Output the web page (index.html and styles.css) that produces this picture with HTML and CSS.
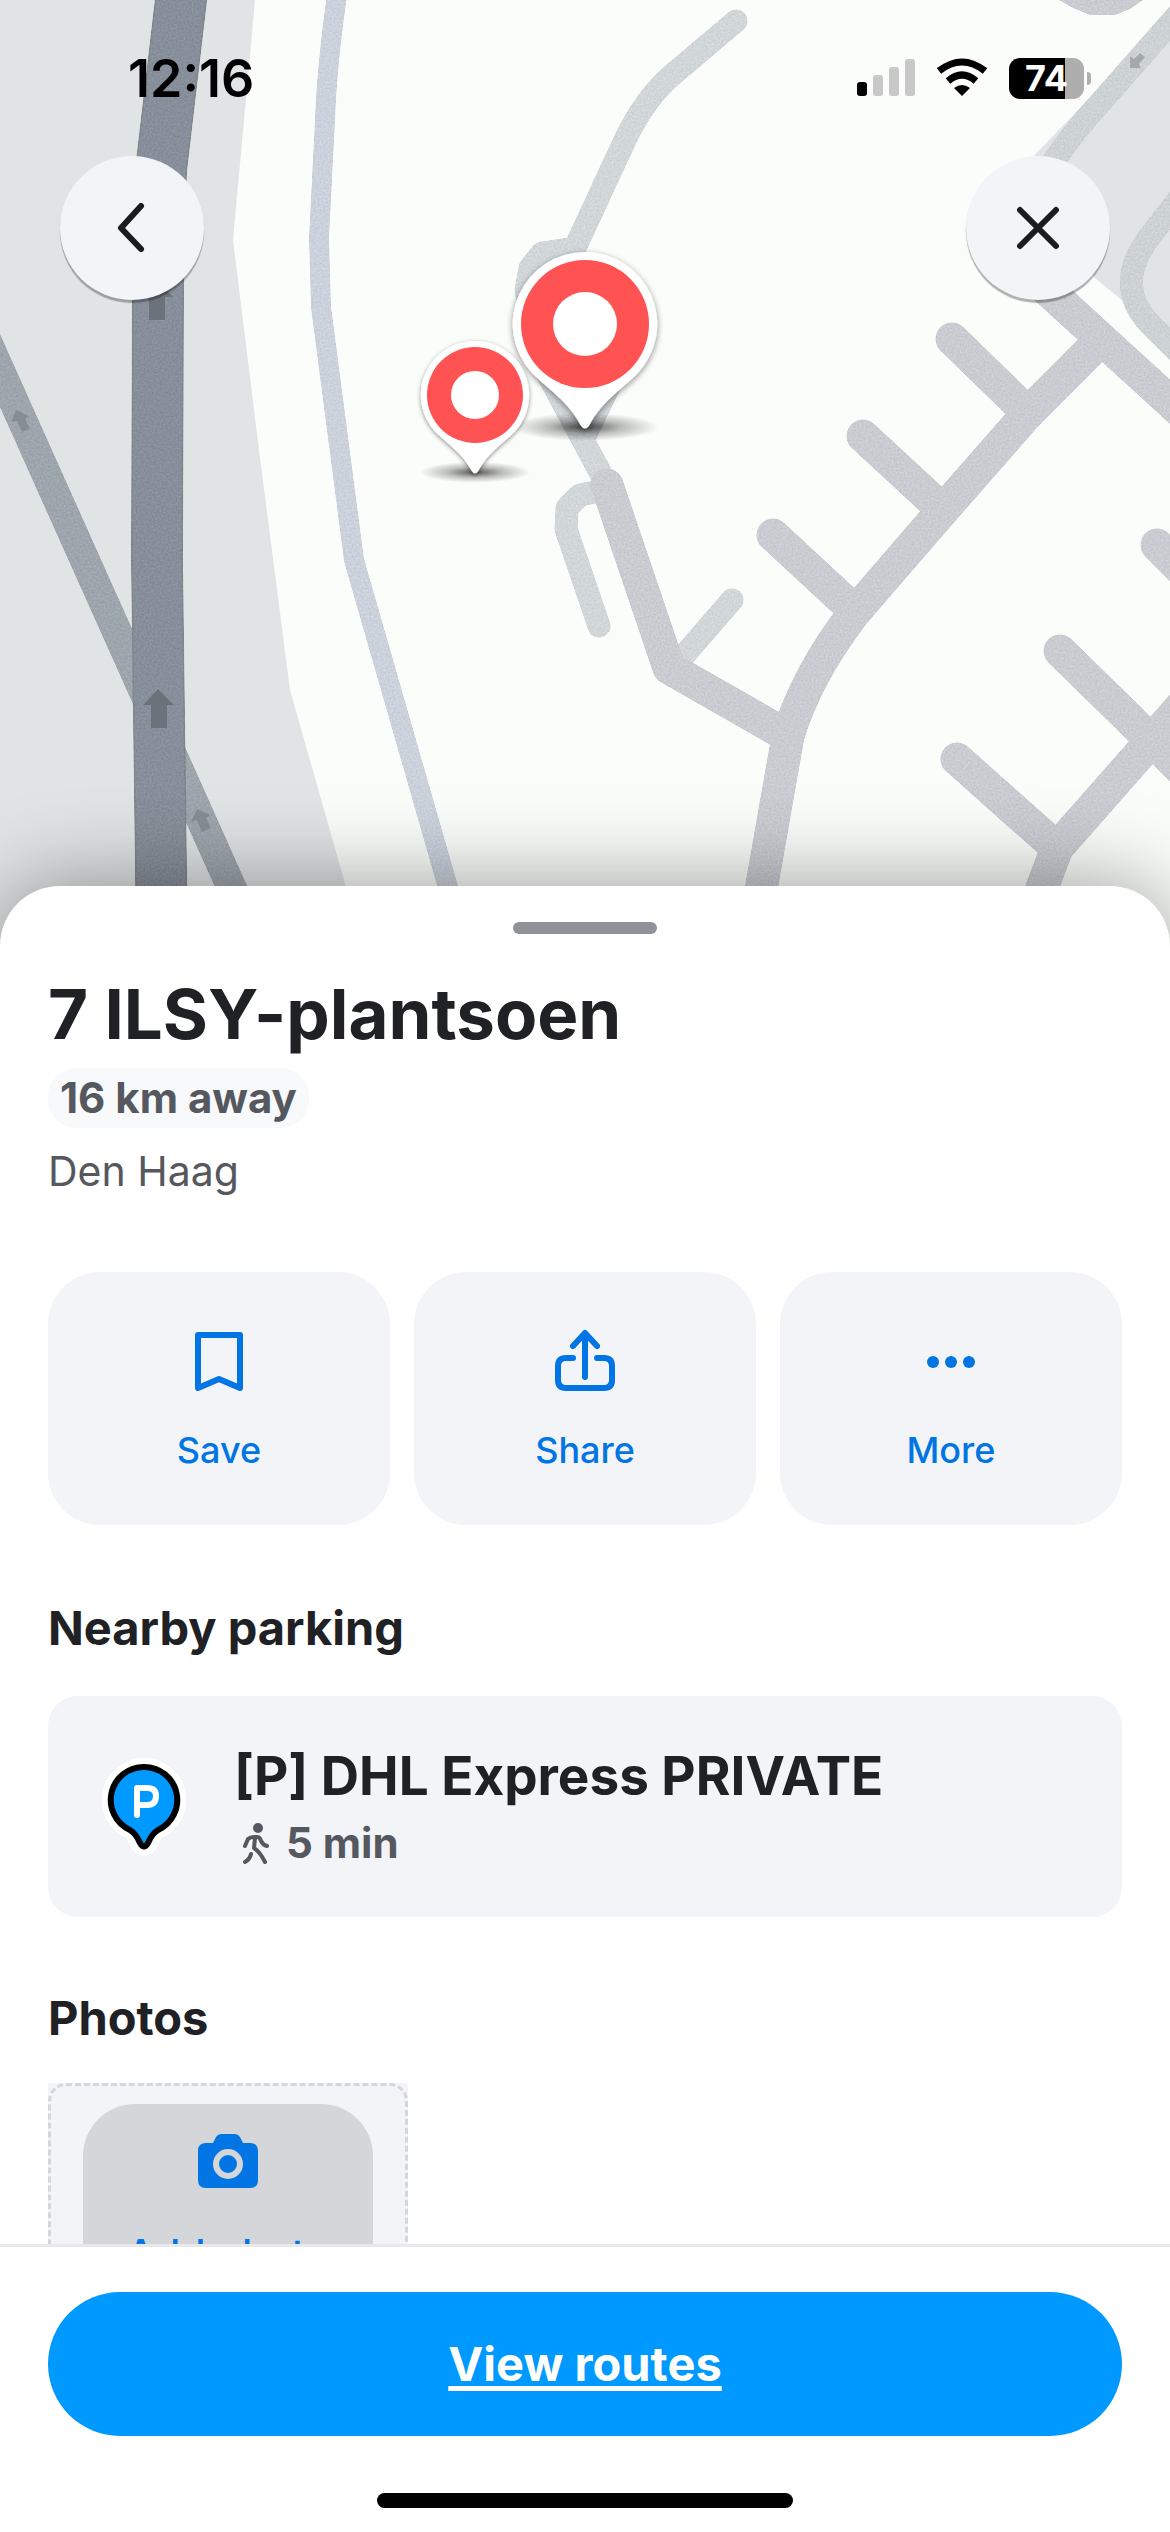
FILE: index.html
```html
<!DOCTYPE html>
<html lang="en">
<head>
    <meta charset="UTF-8">
    <meta name="viewport" content="width=device-width, initial-scale=1.0">
    <title>7 ILSY-plantsoen</title>
    <link rel="stylesheet" href="styles.css">
</head>
<body>
    <!-- Map -->
    <header class="map">
        <svg class="map-canvas" viewBox="0 0 1170 950" preserveAspectRatio="xMidYMin slice" aria-hidden="true">
            <defs>
                <radialGradient id="pinShadow">
                    <stop offset="0" stop-color="#000" stop-opacity="0.65"/>
                    <stop offset="0.5" stop-color="#000" stop-opacity="0.25"/>
                    <stop offset="1" stop-color="#000" stop-opacity="0"/>
                </radialGradient>
                <filter id="pinGlow" x="-20%" y="-20%" width="140%" height="140%">
                    <feDropShadow dx="0" dy="2" stdDeviation="3" flood-color="#000" flood-opacity="0.45"/>
                </filter>
                <!-- Asphalt grain -->
                <filter id="grain" filterUnits="userSpaceOnUse" x="0" y="0" width="1170" height="950" color-interpolation-filters="sRGB">
                    <feTurbulence type="fractalNoise" baseFrequency="0.5" numOctaves="2" result="noise"/>
                    <feColorMatrix in="noise" values="1 0 0 0 0  1 0 0 0 0  1 0 0 0 0  0 0 0 0 1" result="gray"/>
                    <feComposite in="SourceGraphic" in2="gray" operator="arithmetic" k1="0" k2="1" k3="0.12" k4="-0.06" result="mix"/>
                    <feComposite in="mix" in2="SourceGraphic" operator="in"/>
                </filter>
                <g id="pin">
                    <ellipse cx="0" cy="103" rx="74" ry="14" fill="url(#pinShadow)"/>
                    <path d="M0-72a72 72 0 0 1 53 121C35 67 17 77 4 102Q0 107-4 102C-17 77-35 67-53 49A72 72 0 0 1 0-72Z" fill="#fff" filter="url(#pinGlow)"/>
                    <circle r="64" fill="#ff5252"/>
                    <circle r="32" fill="#fff"/>
                </g>
            </defs>

            <!-- Land -->
            <rect width="1170" height="950" fill="#fbfdfa"/>
            <path d="M0 0H255L233 240 259 450 290 690 364 950H0Z" fill="#e0e4e5"/>
            <path d="M1170 15L1049 140 1030 160 1094 277 1124 302 1170 345Z" fill="#e0e4e5"/>

            <g filter="url(#grain)">
                <!-- Paths -->
                <g fill="none" stroke="#d1d6d9" stroke-width="23" stroke-linecap="round" stroke-linejoin="round">
                    <path d="M736 21L671 76Q644 100 625 140L575 248 542 253 530 268 526 290 540 360 607 485"/>
                    <path d="M612 380L585 436"/>
                    <path d="M605 490L580 495 567 508 566 529 599 626"/>
                    <path d="M732 600L680 660"/>
                    <path d="M1180 12L1100 103Q1075 130 1053 162" stroke="#cdd2d5"/>
                    <path d="M1182 195L1154 231Q1112 282 1148 322L1182 356" stroke="#cdd2d5"/>
                </g>

                <!-- Streets -->
                <g fill="none" stroke="#c9cdd2" stroke-width="33" stroke-linecap="round" stroke-linejoin="round">
                    <path d="M607 485L669 668 788 736"/>
                    <path d="M754 930L788 736Q806 676 854 613L943 510 1028 413 1096 345"/>
                    <path d="M982 230L1190 420"/>
                    <path d="M952 339L1028 413"/>
                    <path d="M863 436L943 510"/>
                    <path d="M773 535L854 610"/>
                    <path d="M1030 920L1057 848 1152 740 1200 685"/>
                    <path d="M1060 651L1190 778"/>
                    <path d="M957 759L1057 848"/>
                    <path d="M1157 545L1200 588"/>
                </g>
                <path d="M1059 0L1073 8 1090 15H1115L1130 9 1143 0Z" fill="#c9cdd2"/>
                <path d="M337-5Q327 65 325 120L319 238 321 307 339 445 354 560 466 950" fill="none" stroke="#cbd2dc" stroke-width="20"/>

                <!-- Highway -->
                <path d="M-20 326L260 951" fill="none" stroke="#9ea6ad" stroke-width="30"/>
                <path d="M186-43L161 170 158 285 157 560 162 950" fill="none" stroke="#7f878d" stroke-width="52"/>
                <path d="M186-43L161 170 158 285 157 560 162 950" fill="none" stroke="#87909a" stroke-width="49"/>
            </g>
            <g fill="#6c727a">
                <path d="M158 689L174 705H167V728H151V705H143Z"/>
                <path d="M157 281L173 297H165V320H149V297H141Z"/>
            </g>
            <g fill="#868e93">
                <path d="M16 410L29 416 25 419 30 429 22 432 17 421 11 422Z"/>
                <path d="M197 809L210 815 206 818 211 828 202 832 197 820 191 822Z"/>
                <path d="M1130 68L1130 56 1134 59 1140 53 1145 57 1139 64 1141 68Z" fill="#a4a8ab"/>
            </g>

            <!-- Pins -->
            <use href="#pin" transform="translate(585 324)"/>
            <use href="#pin" transform="translate(475 395) scale(0.75)"/>
        </svg>

        <div class="status-bar">
            <span class="time">12:16</span>
            <div class="status-icons">
                <svg width="58" height="42" viewBox="0 0 58 42" aria-hidden="true">
                    <rect y="25" width="10" height="14" rx="3"/>
                    <rect x="16" y="18" width="10" height="21" rx="3" fill="#c8c8c8"/>
                    <rect x="32" y="10" width="10" height="29" rx="3" fill="#c8c8c8"/>
                    <rect x="48" y="2" width="10" height="37" rx="3" fill="#c8c8c8"/>
                </svg>
                <svg width="50" height="42" viewBox="0 0 50 42" aria-hidden="true">
                    <path d="M25 39L17 31Q25 25 33 31Z"/>
                    <g fill="none" stroke="#000" stroke-width="7">
                        <path d="M11 24Q25 12 39 24"/>
                        <path d="M2 14Q25-4 48 14"/>
                    </g>
                </svg>
                <div class="battery"><span>74</span></div>
            </div>
        </div>

        <nav class="map-nav">
            <button type="button" class="round-button" aria-label="Back">
                <svg width="144" height="144" viewBox="0 0 144 144"><path d="M81 50L61 72 81 93"/></svg>
            </button>
            <button type="button" class="round-button" aria-label="Close">
                <svg width="144" height="144" viewBox="0 0 144 144"><path d="M54 54L90 90M90 54L54 90"/></svg>
            </button>
        </nav>
    </header>

    <!-- Place details -->
    <main class="sheet">
        <div class="handle"></div>
        <h1>7 ILSY-plantsoen</h1>
        <span class="distance">16 km away</span>
        <p class="city">Den Haag</p>

        <div class="actions">
            <button type="button" class="action">
                <svg width="72" height="72" viewBox="0 0 72 72" aria-hidden="true">
                    <path d="M15 9H57V62L36 53 15 62Z"/>
                </svg>
                <span>Save</span>
            </button>
            <button type="button" class="action">
                <svg width="72" height="72" viewBox="0 0 72 72" aria-hidden="true">
                    <path d="M36 51V8M24 20L36 7 48 20M24 32H17Q9 32 9 40V54Q9 62 17 62H55Q63 62 63 54V40Q63 32 55 32H48"/>
                </svg>
                <span>Share</span>
            </button>
            <button type="button" class="action">
                <svg width="72" height="72" viewBox="0 0 72 72" class="dots" aria-hidden="true">
                    <circle cx="18" cy="36" r="6"/>
                    <circle cx="36" cy="36" r="6"/>
                    <circle cx="54" cy="36" r="6"/>
                </svg>
                <span>More</span>
            </button>
        </div>

        <section class="parking">
            <h2>Nearby parking</h2>
            <a href="#" class="parking-card">
                <svg width="84" height="98" viewBox="0 0 84 98" aria-hidden="true">
                    <path d="M42 9A33 33 0 0 1 56 72C51 75 49 80 47 85Q42 93 37 85C35 80 33 75 28 72A33 33 0 0 1 42 9Z" fill="#fff" stroke="#fff" stroke-width="18"/>
                    <path d="M42 9A33 33 0 0 1 56 72C51 75 49 78 46 85Q42 92 38 85C35 78 33 75 28 72A33 33 0 0 1 42 9Z" fill="#0099ff" stroke="#000" stroke-width="6"/>
                    <path d="M35 57V30H45Q54 30 54 38 54 47 45 47H35" fill="none" stroke="#fff" stroke-width="6" stroke-linecap="round" stroke-linejoin="round"/>
                </svg>
                <div>
                    <h3>[P] DHL Express PRIVATE</h3>
                    <p class="walk">
                        <svg width="40" height="44" viewBox="0 0 40 44" aria-hidden="true">
                            <circle cx="24" cy="7" r="5"/>
                            <path d="M11 25L14 18Q16 16 20 16H23Q26 16 27 20 29 24 33 25M21 17L20 27Q26 31 31 41M17 33Q16 38 11 41"/>
                        </svg>
                        5 min
                    </p>
                </div>
            </a>
        </section>

        <section class="photos">
            <h2>Photos</h2>
            <div class="photo-slot">
                <div class="photo-frame">
                    <button type="button" class="add-photo">
                        <svg width="60" height="54" viewBox="0 0 60 54" aria-hidden="true">
                            <path d="M8 9H15L18 3Q20 0 23 0H37Q40 0 42 3L45 9H52Q60 9 60 17V46Q60 54 52 54H8Q0 54 0 46V17Q0 9 8 9Z" fill="#0075e3"/>
                            <circle cx="30" cy="30" r="12" fill="#0075e3" stroke="#d5d6da" stroke-width="6"/>
                        </svg>
                        <span>Add photo</span>
                    </button>
                </div>
            </div>
        </section>
    </main>

    <!-- Footer -->
    <footer class="footer">
        <a href="#" class="routes-button">View routes</a>
        <div class="home-indicator"></div>
    </footer>
</body>
</html>
```
FILE: styles.css
```css
* {
    box-sizing: border-box;
}

body {
    margin: 0;
    height: 100vh;
    display: flex;
    flex-direction: column;
    overflow: hidden;
    background: #ffffff;
    color: #202124;
    font-family: Inter, "Liberation Sans", sans-serif;
}

h1, h2, h3, p {
    margin: 0;
}

button {
    border: none;
    padding: 0;
    font-family: inherit;
    cursor: pointer;
}

/* Map */
.map {
    position: relative;
    flex: none;
    height: 950px;
}

.map-canvas {
    position: absolute;
    top: 0;
    left: 0;
    width: 100%;
    height: 100%;
}

.status-bar {
    position: relative;
    display: flex;
    justify-content: space-between;
    align-items: center;
    height: 156px;
    padding: 0 80px 0 128px;
    color: #000000;
}

.time {
    font-size: 52px;
    font-weight: 600;
}

.status-icons {
    display: flex;
    align-items: center;
    gap: 22px;
}

.battery {
    position: relative;
    width: 75px;
    height: 41px;
    border-radius: 11px;
    background: linear-gradient(90deg, #000000 75%, #aeaeae 75%);
    color: #ffffff;
    font-size: 36px;
    font-weight: 700;
    line-height: 41px;
    text-align: center;
    margin-right: 6px;
}

/* Battery tip */
.battery::after {
    content: "";
    position: absolute;
    right: -7px;
    top: 14px;
    width: 4px;
    height: 13px;
    border-radius: 0 4px 4px 0;
    background: #aeaeae;
}

.map-nav {
    position: relative;
    display: flex;
    justify-content: space-between;
    padding: 0 60px;
}

.round-button {
    width: 144px;
    height: 144px;
    border-radius: 50%;
    background: #f2f4f8;
    box-shadow: 0 3px 1px rgba(0, 0, 0, 0.3);
}

.round-button svg {
    display: block;
    fill: none;
    stroke: #1b1c20;
    stroke-width: 6;
    stroke-linecap: round;
    stroke-linejoin: round;
}

/* Bottom sheet */
.sheet {
    position: relative;
    flex: 1;
    min-height: 0;
    margin-top: -64px;
    padding: 36px 48px 0;
    border-radius: 60px 60px 0 0;
    background: #ffffff;
    box-shadow: 0 0 90px rgba(0, 0, 0, 0.4);
}

.handle {
    width: 144px;
    height: 12px;
    margin: 0 auto 38px;
    border-radius: 6px;
    background: #8e939a;
}

h1 {
    font-size: 69px;
    font-weight: 700;
    line-height: 84px;
}

.distance {
    display: block;
    width: fit-content;
    margin-top: 12px;
    padding: 0 12px;
    border-radius: 28px;
    background: #f8f9fb;
    color: #55585e;
    font-size: 42px;
    font-weight: 700;
    line-height: 60px;
}

.city {
    margin-top: 18px;
    color: #55585e;
    font-size: 41px;
    line-height: 50px;
}

.actions {
    display: flex;
    gap: 24px;
    margin-top: 76px;
}

.action {
    flex: 1;
    display: flex;
    flex-direction: column;
    align-items: center;
    gap: 30px;
    padding: 54px 0 53px;
    border-radius: 52px;
    background: #f2f4f8;
    color: #0075e3;
    font-size: 36px;
    font-weight: 500;
    line-height: 44px;
}

.action svg {
    fill: none;
    stroke: #0075e3;
    stroke-width: 6;
    stroke-linecap: round;
    stroke-linejoin: round;
}

.action .dots {
    fill: #0075e3;
    stroke: none;
}

section {
    margin-top: 74px;
}

h2 {
    margin-bottom: 39px;
    font-size: 47px;
    font-weight: 700;
    line-height: 58px;
}

.parking-card {
    display: flex;
    align-items: center;
    gap: 48px;
    padding: 48px 54px 47px;
    border-radius: 30px;
    background: #f2f4f8;
    color: #202124;
    text-decoration: none;
}

h3 {
    font-size: 53px;
    font-weight: 700;
    line-height: 64px;
}

.walk {
    display: flex;
    align-items: center;
    gap: 12px;
    margin-top: 8px;
    color: #55585e;
    font-size: 42px;
    font-weight: 700;
    line-height: 54px;
}

.walk svg {
    fill: none;
    stroke: #55585e;
    stroke-width: 4;
    stroke-linecap: round;
    stroke-linejoin: round;
}

.walk circle {
    fill: #55585e;
    stroke: none;
}

.photos {
    margin-top: 72px;
}

.photos h2 {
    margin-bottom: 36px;
}

.photo-slot {
    width: 360px;
    background: #f2f4f8;
}

.photo-frame {
    height: 270px;
    padding: 18px 32px;
    border: 3px dashed #d5d6da;
    border-radius: 18px;
}

.add-photo {
    display: flex;
    flex-direction: column;
    align-items: center;
    gap: 42px;
    width: 100%;
    padding: 30px 0;
    border-radius: 52px;
    background: #d5d6da;
    color: #0075e3;
    font-size: 41px;
    font-weight: 500;
    line-height: 48px;
}

/* Footer */
.footer {
    position: relative;
    flex: none;
    padding: 45px 48px 24px;
    border-top: 3px solid #e8e9ed;
    background: #ffffff;
}

.routes-button {
    display: block;
    border-radius: 72px;
    background: #0099ff;
    color: #ffffff;
    font-size: 47px;
    font-weight: 700;
    line-height: 144px;
    text-align: center;
    text-underline-offset: 5px;
    text-decoration-thickness: 5px;
}

.home-indicator {
    width: 416px;
    height: 15px;
    margin: 57px auto 0;
    border-radius: 8px;
    background: #000000;
}
```
